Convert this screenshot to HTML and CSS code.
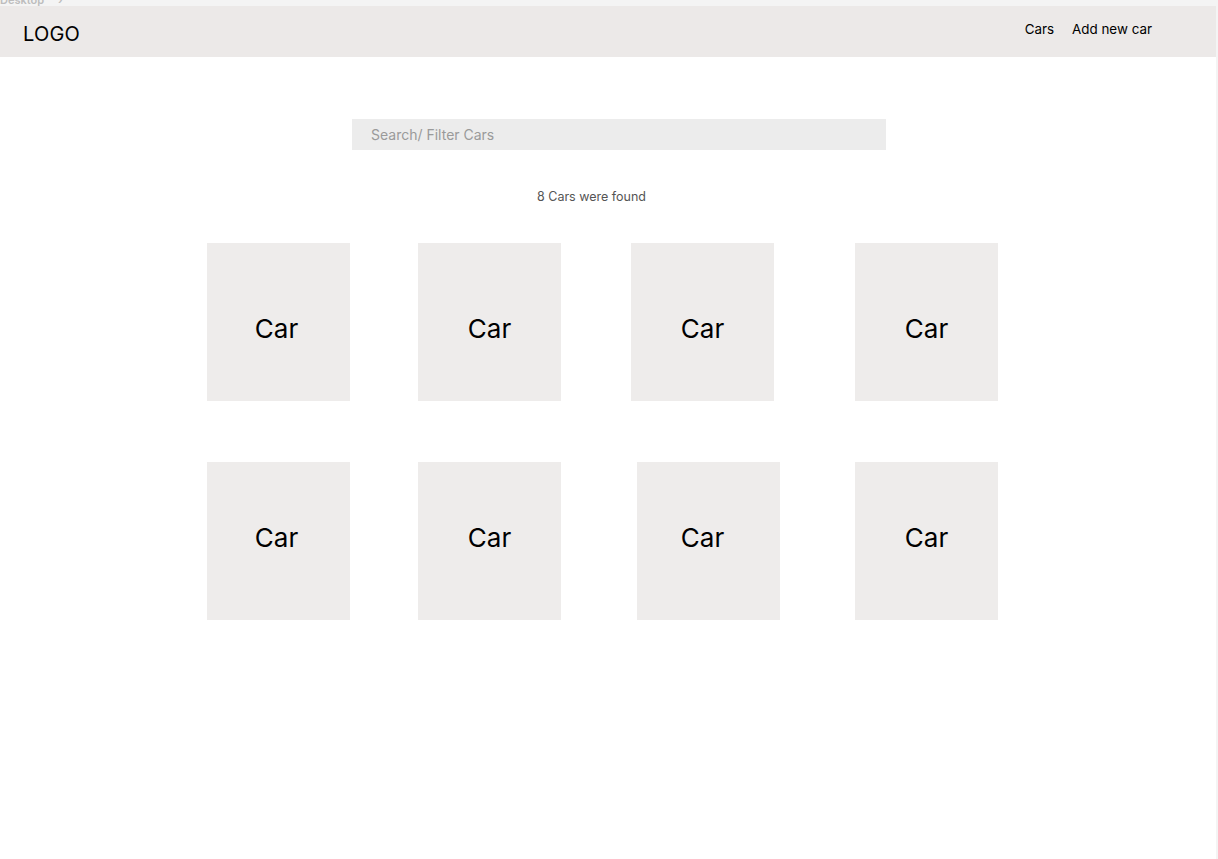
FILE: index.html
```html
<!DOCTYPE html>
<html lang="en">
<head>
<meta charset="utf-8">
<title>Cars</title>
<link rel="stylesheet" href="styles.css">
</head>
<body>
<div class="canvas">
  <div class="frame-label"><span>Desktop</span><span class="chev">›</span></div>
  <div class="frame">
    <header class="header">
      <div class="logo">LOGO</div>
      <nav class="nav">
        <a class="nav-link">Cars</a>
        <a class="nav-link">Add new car</a>
      </nav>
    </header>
    <main class="main">
      <div class="search">
        <input class="search-input" type="text" placeholder="Search/ Filter Cars">
      </div>
      <p class="count">8 Cars were found</p>
      <div class="grid">
        <div class="card first">Car</div>
        <div class="card">Car</div>
        <div class="card">Car</div>
        <div class="card">Car</div>
      </div>
      <div class="grid grid-second">
        <div class="card first">Car</div>
        <div class="card">Car</div>
        <div class="card shift">Car</div>
        <div class="card">Car</div>
      </div>
    </main>
  </div>
</div>
</body>
</html>
```

FILE: styles.css
```css
* { box-sizing: border-box; }
html, body { margin: 0; padding: 0; }
body {
  background: #f4f4f4;
  font-family: Inter, "Noto Sans", sans-serif;
  color: #000;
  width: 1218px;
  height: 859px;
  overflow: hidden;
}
.canvas {
  width: 1218px;
  height: 859px;
}
.frame-label {
  height: 6px;
  overflow: hidden;
  display: flex;
  gap: 14px;
  font-size: 11px;
  font-weight: 600;
  color: #bdbdbd;
  line-height: 1;
}
.frame-label span { margin-top: -5px; }
.frame {
  width: 1216px;
  height: 853px;
  background: #fff;
}
.header {
  height: 51px;
  background: #ece9e8;
  display: flex;
  justify-content: space-between;
  align-items: flex-start;
}
.logo {
  font-size: 20px;
  margin: 16px 0 0 23px;
  line-height: 24px;
  letter-spacing: 0.2px;
}
.nav {
  display: flex;
  gap: 18px;
  margin: 15px 64px 0 0;
}
.nav-link {
  font-size: 13.4px;
  line-height: 17px;
  color: #000;
}
.main {
  display: flex;
  flex-direction: column;
  align-items: flex-start;
}
.search {
  margin: 62px 0 0 352px;
  width: 534px;
  height: 31px;
  background: #ececec;
}
.search-input {
  width: 100%;
  height: 100%;
  border: 0;
  background: transparent;
  padding: 0 0 0 19px;
  font-family: Inter, "Noto Sans", sans-serif;
  font-size: 14px;
  outline: none;
}
.search-input::placeholder { color: #9a9a9a; }
.count {
  margin: 39px 0 0 537px;
  font-size: 12.5px;
  line-height: 16px;
  color: #555;
}
.grid {
  margin: 38px 0 0 207px;
  display: grid;
  grid-template-columns: 211px 213px 224px 143px;
  grid-auto-rows: 158px;
}
.grid-second { margin-top: 61px; }
.card {
  width: 143px;
  height: 158px;
  background: #eeeceb;
  display: flex;
  align-items: center;
  justify-content: center;
  font-size: 26px;
  padding-top: 12px;
}
.card.first { padding-right: 4px; }
.grid-second .card {
  padding-top: 0;
  padding-bottom: 8px;
}
.card.shift {
  margin-left: 6px;
  padding-right: 12px;
}
```
